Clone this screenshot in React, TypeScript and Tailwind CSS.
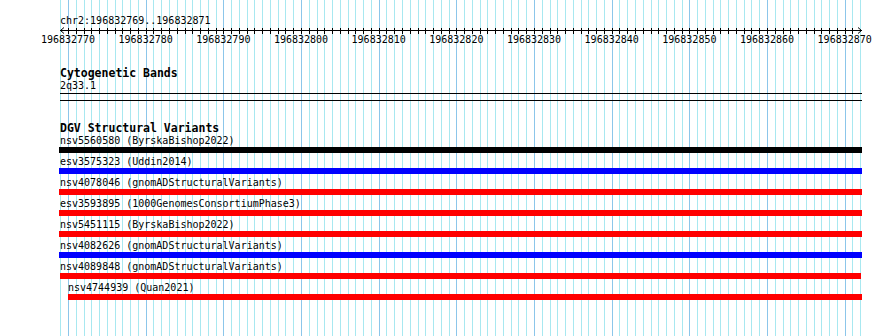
import React from "react";

const PX_PER_BP = 7.767;
const START_BP = 196832769;
const END_BP = 196832872;

const xOf = (bp: number) => 68 + (bp - 196832770) * PX_PER_BP;

const variants = [
  { id: "nsv5560580", study: "ByrskaBishop2022", color: "bg-[#000000]", from: 59, to: 862 },
  { id: "esv3575323", study: "Uddin2014", color: "bg-[#0000ff]", from: 59, to: 862 },
  { id: "nsv4078046", study: "gnomADStructuralVariants", color: "bg-[#ff0000]", from: 59, to: 862 },
  { id: "esv3593895", study: "1000GenomesConsortiumPhase3", color: "bg-[#ff0000]", from: 59, to: 862 },
  { id: "nsv5451115", study: "ByrskaBishop2022", color: "bg-[#ff0000]", from: 59, to: 862 },
  { id: "nsv4082626", study: "gnomADStructuralVariants", color: "bg-[#0000ff]", from: 59, to: 862 },
  { id: "nsv4089848", study: "gnomADStructuralVariants", color: "bg-[#ff0000]", from: 60, to: 861 },
  { id: "nsv4744939", study: "Quan2021", color: "bg-[#ff0000]", from: 68, to: 862 },
];

function Grid() {
  const lines = [];
  for (let bp = START_BP; bp <= END_BP; bp++) {
    const x = Math.round(xOf(bp)) + 0.5;
    const major = bp % 10 === 0;
    lines.push(
      <line key={bp} x1={x} x2={x} y1={0} y2={336} stroke={major ? "#8cc6ea" : "#a8e8f0"} strokeWidth={1} />
    );
  }
  return (
    <svg className="absolute inset-0" width={890} height={336}>
      {lines}
    </svg>
  );
}

function Ruler() {
  const ticks = [];
  for (let bp = START_BP + 1; bp <= END_BP - 1; bp++) {
    const x = Math.round(xOf(bp)) + 0.5 - 60;
    ticks.push(<line key={bp} x1={x} x2={x} y1={1} y2={7} stroke="#000" strokeWidth={1} />);
  }
  return (
    <svg width={803} height={7} className="block">
      <line x1={0} x2={802} y1={3.5} y2={3.5} stroke="#000" strokeWidth={1} />
      {ticks}
      <polyline points="4,0.5 0.5,3.5 4,6.5" fill="none" stroke="#000" strokeWidth={1} />
      <polyline points="798,0.5 801.5,3.5 798,6.5" fill="none" stroke="#000" strokeWidth={1} />
    </svg>
  );
}

export default function App() {
  const labels = [];
  for (let bp = 196832770; bp <= 196832870; bp += 10) labels.push(bp);

  return (
    <div className="relative w-[890px] h-[336px] bg-white overflow-hidden text-black font-['DejaVu_Sans_Mono',monospace]">
      <Grid />
      <div className="relative pl-[60px] w-[862px]">
        <div className="pt-[15px] text-[10px] leading-[12px]">chr2:196832769..196832871</div>
        <Ruler />
        <div className="relative h-[12px] text-[10px] leading-[12px]">
          {labels.map((bp) => (
            <span
              key={bp}
              className="absolute top-0 w-[60px] text-center"
              style={{ left: xOf(bp) - 60 - 30 }}
            >
              {bp}
            </span>
          ))}
        </div>

        {/* Cytogenetic Bands */}
        <div className="mt-[21px] text-[11.5px] leading-[13px] font-bold">Cytogenetic Bands</div>
        <div className="text-[10px] leading-[12px]">2q33.1</div>
        <div className="mt-[1px] h-px bg-black" />
        <div className="mt-[6px] h-px bg-black" />

        {/* DGV Structural Variants */}
        <div className="mt-[20px] text-[11.5px] leading-[14px] font-bold">DGV Structural Variants</div>
        <div className="flex flex-col gap-[3px]">
          {variants.map((v) => (
            <div key={v.id} style={{ marginLeft: v.from - 60, width: v.to - v.from }}>
              <div
                className="text-[10px] leading-[12px] whitespace-nowrap"
                style={{ paddingLeft: Math.max(0, 60 - v.from) }}
              >
                {v.id} ({v.study})
              </div>
              <div className={`h-[6px] ${v.color}`} />
            </div>
          ))}
        </div>
      </div>
    </div>
  );
}
